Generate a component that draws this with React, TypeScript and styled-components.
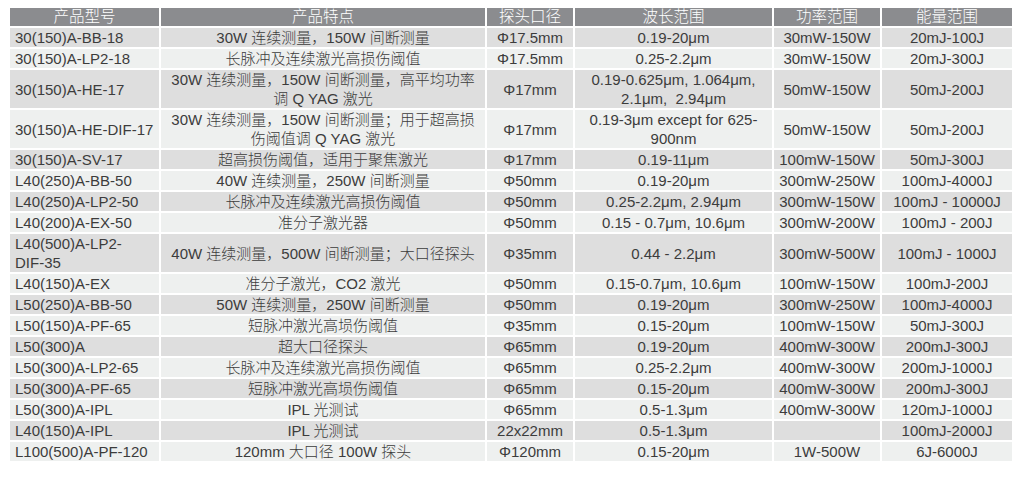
import React from 'react';
import styled, { createGlobalStyle } from 'styled-components';

const GlobalStyle = createGlobalStyle`
  html, body {
    margin: 0;
    padding: 0;
    background: #ffffff;
  }
  body {
    font-family: "Liberation Sans", "Noto Sans CJK SC", sans-serif;
  }
`;

type Row = [string, string, string, string, string, string];

const columns = [
  { title: '产品型号', width: 151 },
  { title: '产品特点', width: 326 },
  { title: '探头口径', width: 88 },
  { title: '波长范围', width: 199 },
  { title: '功率范围', width: 108 },
  { title: '能量范围', width: 130 },
];

const rows: Row[] = [
  ['30(150)A-BB-18', '30W 连续测量，150W 间断测量', 'Φ17.5mm', '0.19-20μm', '30mW-150W', '20mJ-100J'],
  ['30(150)A-LP2-18', '长脉冲及连续激光高损伤阈值', 'Φ17.5mm', '0.25-2.2μm', '30mW-150W', '20mJ-300J'],
  ['30(150)A-HE-17', '30W 连续测量，150W 间断测量，高平均功率\n调 Q YAG 激光', 'Φ17mm', '0.19-0.625μm, 1.064μm,\n2.1μm,  2.94μm', '50mW-150W', '50mJ-200J'],
  ['30(150)A-HE-DIF-17', '30W 连续测量，150W 间断测量；用于超高损\n伤阈值调 Q YAG 激光', 'Φ17mm', '0.19-3μm except for 625-\n900nm', '50mW-150W', '50mJ-200J'],
  ['30(150)A-SV-17', '超高损伤阈值，适用于聚焦激光', 'Φ17mm', '0.19-11μm', '100mW-150W', '50mJ-300J'],
  ['L40(250)A-BB-50', '40W 连续测量，250W 间断测量', 'Φ50mm', '0.19-20μm', '300mW-250W', '100mJ-4000J'],
  ['L40(250)A-LP2-50', '长脉冲及连续激光高损伤阈值', 'Φ50mm', '0.25-2.2μm, 2.94μm', '300mW-150W', '100mJ - 10000J'],
  ['L40(200)A-EX-50', '准分子激光器', 'Φ50mm', '0.15 - 0.7μm, 10.6μm', '300mW-200W', '100mJ - 200J'],
  ['L40(500)A-LP2-\nDIF-35', '40W 连续测量，500W 间断测量；大口径探头', 'Φ35mm', '0.44 - 2.2μm', '300mW-500W', '100mJ - 1000J'],
  ['L40(150)A-EX', '准分子激光，CO2 激光', 'Φ50mm', '0.15-0.7μm, 10.6μm', '100mW-150W', '100mJ-200J'],
  ['L50(250)A-BB-50', '50W 连续测量，250W 间断测量', 'Φ50mm', '0.19-20μm', '300mW-250W', '100mJ-4000J'],
  ['L50(150)A-PF-65', '短脉冲激光高埙伤阈值', 'Φ35mm', '0.15-20μm', '100mW-150W', '50mJ-300J'],
  ['L50(300)A', '超大口径探头', 'Φ65mm', '0.19-20μm', '400mW-300W', '200mJ-300J'],
  ['L50(300)A-LP2-65', '长脉冲及连续激光高损伤阈值', 'Φ65mm', '0.25-2.2μm', '400mW-300W', '200mJ-1000J'],
  ['L50(300)A-PF-65', '短脉冲激光高埙伤阈值', 'Φ65mm', '0.15-20μm', '400mW-300W', '200mJ-300J'],
  ['L50(300)A-IPL', 'IPL 光测试', 'Φ65mm', '0.5-1.3μm', '400mW-300W', '120mJ-1000J'],
  ['L40(150)A-IPL', 'IPL 光测试', '22x22mm', '0.5-1.3μm', '', '100mJ-2000J'],
  ['L100(500)A-PF-120', '120mm 大口径 100W 探头', 'Φ120mm', '0.15-20μm', '1W-500W', '6J-6000J'],
];

const App: React.FC = () => {
  return (
    <Page>
      <GlobalStyle />
      <Table>
        <colgroup>
          {columns.map((c) => (
            <col key={c.title} style={{ width: c.width }} />
          ))}
        </colgroup>
        <thead>
          <tr>
            {columns.map((c) => (
              <HeadCell key={c.title}>{c.title}</HeadCell>
            ))}
          </tr>
        </thead>
        <tbody>
          {rows.map((r, i) => (
            <BodyRow key={r[0]} $shaded={i % 2 === 0}>
              {r.map((v, j) => (
                <Cell key={j} $left={j === 0}>
                  {v}
                </Cell>
              ))}
            </BodyRow>
          ))}
        </tbody>
      </Table>
    </Page>
  );
};

const Page = styled.div`
  padding: 8px 10px;
`;

const Table = styled.table`
  width: 1002px;
  table-layout: fixed;
  border-collapse: separate;
  border-spacing: 0;
  font-size: 15px;
  font-weight: 300;
  color: #3c3c3c;
`;

const HeadCell = styled.th`
  box-sizing: border-box;
  background: #8b8c8f;
  color: #ffffff;
  font-weight: 300;
  font-size: 15.5px;
  line-height: 18px;
  padding: 0;
  text-align: center;
  border-right: 2px solid #ffffff;
  border-bottom: 2px solid #ffffff;
  &:last-child {
    border-right: none;
  }
`;

const BodyRow = styled.tr<{ $shaded: boolean }>`
  background: ${(p) => (p.$shaded ? '#dedede' : '#eef0ef')};
`;

const Cell = styled.td<{ $left: boolean }>`
  box-sizing: border-box;
  padding: 0 0 0 ${(p) => (p.$left ? '5px' : '0')};
  line-height: 19px;
  text-align: ${(p) => (p.$left ? 'left' : 'center')};
  white-space: pre-wrap;
  border-right: 2px solid #ffffff;
  border-bottom: 2px solid #ffffff;
  &:last-child {
    border-right: none;
  }
`;

export default App;
